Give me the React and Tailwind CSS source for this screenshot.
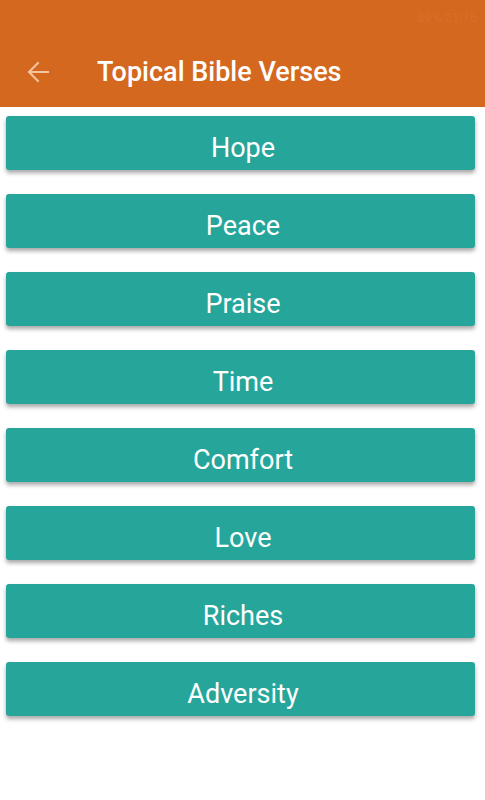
import React from 'react';

const topics = ['Hope', 'Peace', 'Praise', 'Time', 'Comfort', 'Love', 'Riches', 'Adversity'];

function App() {
    return (
        <div className="w-[485px] h-[800px] bg-white overflow-hidden" style={{ fontFamily: 'Roboto, "Liberation Sans", sans-serif' }}>
            {/* App bar */}
            <header className="h-[107px] bg-[#d4681f] flex flex-col">
                <div className="h-[36px] flex items-center justify-end px-2 text-[13px] text-[#d8702b]">
                    <span>89% 21:16</span>
                </div>
                <div className="flex-1 flex items-center pt-[1px]">
                    <div className="w-[97px] flex items-center pl-[26px]">
                        <svg width="24" height="24" viewBox="0 0 24 24" fill="none" stroke="#f4c4a1" strokeWidth="2" strokeLinecap="square">
                            <path d="M22 12H3" />
                            <path d="M12 3l-9 9 9 9" />
                        </svg>
                    </div>
                    <h1 className="text-white text-[27px] font-medium">Topical Bible Verses</h1>
                </div>
            </header>

            {/* Topic list */}
            <div className="flex flex-col gap-[24px] pl-[6px] pt-[9px] pr-[10px]">
                {topics.map(t => (
                    <button
                        key={t}
                        className="h-[54px] w-full bg-[#26a69a] rounded-[3px] text-white text-[27px] pt-[10px] pl-[5px] shadow-[0_3px_4px_rgba(0,0,0,0.35)] flex items-center justify-center"
                    >
                        {t}
                    </button>
                ))}
            </div>
        </div>
    );
}

export default App;
